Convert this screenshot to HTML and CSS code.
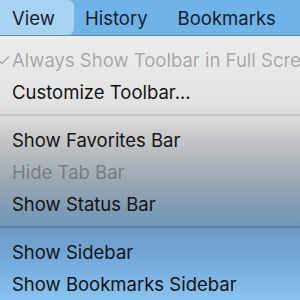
FILE: index.html
```html
<!DOCTYPE html>
<html>
<head>
<meta charset="utf-8">
<link rel="stylesheet" href="styles.css">
</head>
<body>
<div class="screen">
  <nav class="menubar">
    <span class="mb-item active">View</span>
    <span class="mb-item">History</span>
    <span class="mb-item">Bookmarks</span>
  </nav>
  <div class="menu">
    <div class="row disabled"><span class="check">✓</span>Always Show Toolbar in Full Screen</div>
    <div class="row">Customize Toolbar...</div>
    <div class="sep"></div>
    <div class="row">Show Favorites Bar</div>
    <div class="row disabled">Hide Tab Bar</div>
    <div class="row">Show Status Bar</div>
    <div class="sep sep-blue"></div>
    <div class="row">Show Sidebar</div>
    <div class="row">Show Bookmarks Sidebar</div>
  </div>
</div>
</body>
</html>
```
FILE: styles.css
```css
html, body {
  margin: 0;
  padding: 0;
  width: 300px;
  height: 300px;
  overflow: hidden;
}
.screen {
  width: 300px;
  height: 300px;
  display: flex;
  flex-direction: column;
  font-family: Inter, "Open Sans", sans-serif;
  -webkit-font-smoothing: antialiased;
}
.menubar {
  height: 35px;
  flex: none;
  display: flex;
  align-items: stretch;
  background: #70b4e7;
  border-bottom: 1px solid #5a8db6;
}
.mb-item {
  display: flex;
  align-items: center;
  padding: 0 12px 0 12px;
  font-size: 18.5px;
  color: #16222c;
  white-space: nowrap;
}
.mb-item.active {
  background: #a9d3f2;
  border-radius: 0 6px 6px 0;
  width: 50px;
}
.mb-item:nth-child(2) {
  padding-left: 11px;
  padding-right: 18px;
}
.menu {
  flex: 1;
  padding-top: 8px;
  background: linear-gradient(to bottom,
    #ededed 0px,
    #e3e3e3 64px,
    #d7d8d9 84px,
    #bcbec1 114px,
    #9ca8b3 144px,
    #7e9bb4 174px,
    #6e98bd 190px,
    #74a9db 224px,
    #8ac3ef 264px);
  overflow: hidden;
}
.row {
  position: relative;
  height: 32px;
  line-height: 32px;
  padding-left: 12px;
  font-size: 18.5px;
  color: #141414;
  white-space: nowrap;
}
.row.disabled {
  color: rgba(0, 0, 0, 0.3);
}
.check {
  position: absolute;
  left: -4px;
  top: 0;
  font-size: 17px;
}
.sep {
  height: 16px;
  padding-top: 6px;
  box-sizing: border-box;
}
.sep::before {
  content: "";
  display: block;
  width: 100%;
  height: 2px;
  background: rgba(0, 0, 0, 0.1);
}
.sep-blue::before {
  background: rgba(30, 60, 90, 0.22);
}
```
